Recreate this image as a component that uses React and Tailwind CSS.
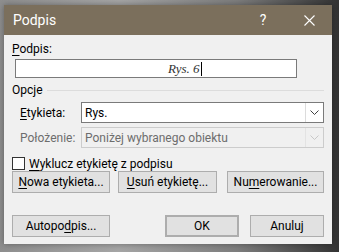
import React from 'react';

function Chevron({ disabled }) {
    return (
        <svg width="9" height="6" viewBox="0 0 9 6" fill="none" stroke={disabled ? '#c8c8c8' : '#404040'} strokeWidth="1">
            <path d="M0.5 0.5 L4.5 4.5 L8.5 0.5" />
        </svg>
    );
}

function Btn({ children, className = '' }) {
    return (
        <div className={`h-[22px] flex items-center justify-center bg-[#e1e1e1] border border-[#adadad] ${className}`}>
            {children}
        </div>
    );
}

function Combo({ value, disabled }) {
    return (
        <div className={`flex-1 h-[21px] flex border ${disabled ? 'border-[#cccccc] bg-[#f0f0f0] text-[#6d6d6d]' : 'border-[#7a7a7a] bg-white text-black'}`}>
            <div className="flex-1 flex items-center pl-[3px] leading-none">{value}</div>
            <div className={`w-[18px] flex items-center justify-center border-l ${disabled ? 'border-[#e3e3e3]' : 'border-[#dcdcdc]'}`}>
                <Chevron disabled={disabled} />
            </div>
        </div>
    );
}

const U = ({ children }) => <span className="underline underline-offset-2 decoration-1">{children}</span>;

export default function App() {
    return (
        <div className="w-[339px] h-[252px] overflow-hidden pt-[5px] pl-[4px] bg-[linear-gradient(90deg,#8e8e8e,#a5a5a5_35%,#7d7d7d_70%,#333333)] font-[Roboto,sans-serif]">
            <div className="w-[328px] h-[239px] flex flex-col shadow-[0_0_6px_rgba(0,0,0,0.35)]">
                <div className="h-[30px] flex items-center bg-[#7b6f5c] text-white">
                    <span className="pl-[9px] text-[14px] leading-none">Podpis</span>
                    <div className="flex-1" />
                    <div className="w-[46px] flex justify-center text-[14px] leading-none">?</div>
                    <div className="w-[46px] flex justify-center">
                        <svg width="11" height="11" viewBox="0 0 11 11" stroke="white" strokeWidth="1.1">
                            <path d="M0.5 0.5 L10.5 10.5 M10.5 0.5 L0.5 10.5" />
                        </svg>
                    </div>
                </div>

                <div className="flex-1 bg-[#f0f0f0] px-[8px] pt-[6px] text-[12px] leading-[16px] text-black">
                    <div className="h-[16px]"><U>P</U>odpis:</div>
                    <div className="mt-[2px] ml-[3px] w-[282px] h-[19px] flex items-center border border-[#7a7a7a] bg-white pl-[152px]">
                        <span className="font-[Liberation_Serif,serif] italic text-[13px] text-[#333333] leading-none">Rys. 6</span>
                        <span className="w-px h-[14px] bg-black ml-[1px]" />
                    </div>

                    <div className="mt-[4px] h-[16px] flex items-center">
                        <span>Opcje</span>
                        <div className="flex-1 h-px bg-[#dcdcdc] ml-[4px]" />
                    </div>

                    <div className="mt-[4px] flex items-center">
                        <span className="w-[69px] pl-[8px]"><U>E</U>tykieta:</span>
                        <Combo value="Rys." />
                    </div>
                    <div className="mt-[4px] flex items-center">
                        <span className="w-[69px] pl-[8px] text-[#6d6d6d]">Położenie:</span>
                        <Combo value="Poniżej wybranego obiektu" disabled />
                    </div>

                    <div className="mt-[9px] h-[13px] flex items-center">
                        <div className="w-[13px] h-[13px] border border-[#333333] bg-white" />
                        <span className="ml-[4px]"><U>W</U>yklucz etykietę z podpisu</span>
                    </div>

                    <div className="mt-[1px] flex">
                        <Btn className="w-[98px]"><U>N</U>owa etykieta...</Btn>
                        <Btn className="ml-[8px] w-[99px]"><U>U</U>suń etykietę...</Btn>
                        <Btn className="ml-[10px] w-[97px]">Nu<U>m</U>erowanie...</Btn>
                    </div>

                    <div className="mt-[22px] flex">
                        <Btn className="w-[98px]">Autopo<U>d</U>pis...</Btn>
                        <div className="flex-1" />
                        <Btn className="w-[74px] border-2 border-[#0078d7]">OK</Btn>
                        <Btn className="ml-[11px] w-[74px]">Anuluj</Btn>
                    </div>
                </div>
            </div>
        </div>
    );
}
